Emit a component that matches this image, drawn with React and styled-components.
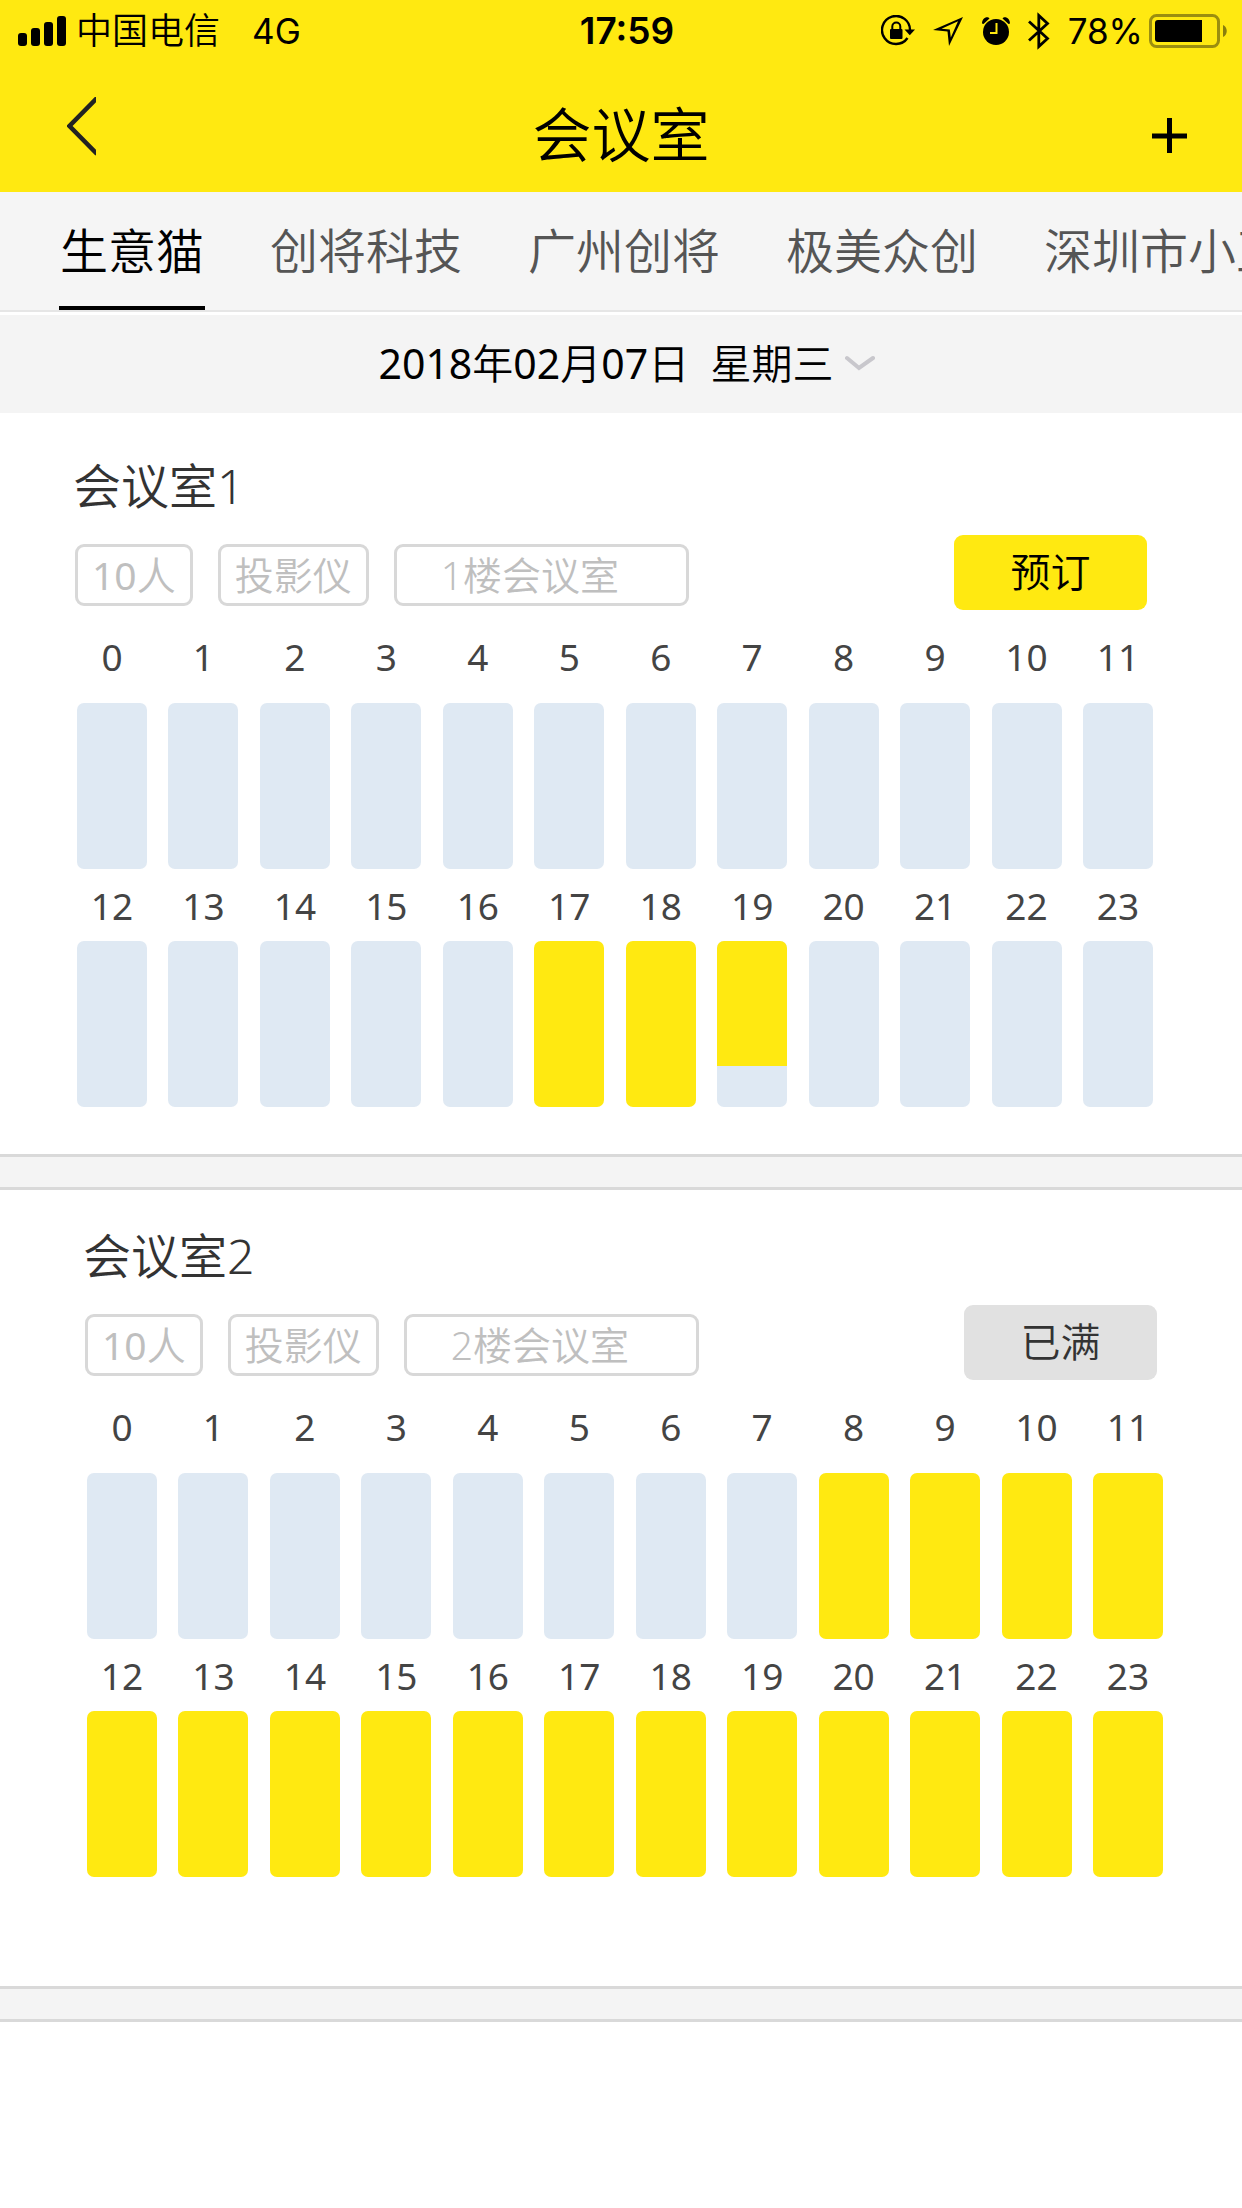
import React from "react";
import styled, { createGlobalStyle, css } from "styled-components";

const YELLOW = "#ffe911";
const FREE = "#dfe9f3";

const GlobalStyle = createGlobalStyle`
  *, *::before, *::after { box-sizing: border-box; }
  html, body { margin: 0; padding: 0; background: #fff; }
  body {
    font-family: "Noto Sans", "Noto Sans CJK SC", sans-serif;
    color: #000;
    overflow-x: hidden;
  }
  button { font: inherit; color: inherit; border: 0; background: none; padding: 0; cursor: pointer; }
  h1, h2, ul, ol { margin: 0; padding: 0; font-weight: 350; list-style: none; }
`;

const Header = styled.header`
  background: ${YELLOW};
`;

const StatusBar = styled.div`
  display: grid;
  grid-template-columns: 1fr auto 1fr;
  align-items: center;
  height: 62px;
  padding: 0 14px 0 18px;
  font-family: Inter, "Noto Sans CJK SC", sans-serif;
  font-size: 35px;
  line-height: 62px;
`;

const StatusLeft = styled.div`
  display: flex;
  align-items: center;
  white-space: nowrap;
`;

const Carrier = styled.span`
  margin: 0 32px 0 8px;
  font-size: 36px;
  font-weight: 350;
`;

const Clock = styled.time`
  padding-left: 8px;
  font-size: 37px;
  font-weight: 600;
`;

const StatusRight = styled.div`
  display: flex;
  align-items: center;
  justify-content: flex-end;
  gap: 18px;
`;

const Power = styled.div`
  display: flex;
  align-items: center;
  gap: 6px;
`;

const NavBar = styled.div`
  display: grid;
  grid-template-columns: 1fr auto 1fr;
  align-items: center;
  height: 130px;
  padding: 0 54px;
`;

const NavButton = styled.button`
  display: flex;
  justify-self: ${(p) => p.$side};
  padding: ${(p) => (p.$side === "end" ? "18px 0 0" : "0 13px")};
`;

const NavTitle = styled.h1`
  padding-top: 14px;
  font-size: 59px;
  line-height: 80px;
`;

const Tabs = styled.nav`
  display: flex;
  gap: 64px;
  height: 120px;
  padding-left: 59px;
  overflow: hidden;
  background: #f5f5f5;
  border-bottom: 2px solid #e6e6e6;
`;

const Tab = styled.button`
  flex: none;
  height: 118px;
  padding: 0 1px;
  font-size: 48px;
  font-weight: 350;
  line-height: 110px;
  color: #555;
  border-top: 4px solid transparent;
  border-bottom: 4px solid transparent;
  ${(p) =>
    p.$active &&
    css`
      color: #000;
      border-bottom-color: #000;
    `}
`;

const DateButton = styled.button`
  display: flex;
  align-items: center;
  justify-content: center;
  gap: 12px;
  width: 100%;
  height: 98px;
  margin-top: 3px;
  padding: 0 0 2px 12px;
  background: #f4f4f4;
  font-size: 41px;
  font-weight: 350;
  line-height: 60px;
  white-space: pre;
`;

const Digits = styled.span`
  font-weight: 400;
`;

const Room = styled.section`
  padding: ${(p) => p.$padding};
`;

const RoomTitle = styled.h2`
  margin-left: -2px;
  font-size: 48px;
  line-height: 60px;
  color: #333;
`;

const RoomInfo = styled.div`
  display: flex;
  align-items: center;
  justify-content: space-between;
  height: 76px;
  margin-top: 18px;
  padding-right: 6px;
`;

const TagList = styled.ul`
  display: flex;
  gap: 25px;
  margin-top: 6px;
`;

const Tag = styled.li`
  height: 62px;
  width: ${(p) => (p.$wide ? "295px" : "auto")};
  padding: 0 ${(p) => (p.$wide ? 44 : 14)}px;
  border: 3px solid #d8d8d8;
  border-radius: 9px;
  font-size: 39px;
  font-weight: 350;
  line-height: 56px;
  color: #bfbfbf;
  white-space: nowrap;
`;

const BookButton = styled.button`
  width: 193px;
  height: 75px;
  border-radius: 9px;
  font-size: 40px;
  font-weight: 350;
  line-height: 74px;
  background: ${(p) => (p.disabled ? "#e1e1e1" : YELLOW)};
  color: ${(p) => (p.disabled ? "#333" : "#000")};
`;

const HourRow = styled.ol`
  display: flex;
  justify-content: space-between;
  padding: ${(p) => p.$top}px 0 0 2px;
`;

const Hour = styled.li`
  display: flex;
  flex-direction: column;
  gap: ${(p) => p.$gap}px;
  width: 70px;
  text-align: center;
  font-size: 37px;
  font-weight: 400;
  line-height: 40px;
  color: #444;
`;

const Slot = styled.div`
  height: 166px;
  border-radius: 7px;
  overflow: hidden;
  background: ${FREE};
`;

const Booked = styled.div`
  background: ${YELLOW};
`;

const Divider = styled.div`
  height: 36px;
  background: #f4f4f4;
  border: solid #d9d9d9;
  border-width: 3px 0;
`;

const SignalIcon = () => (
  <svg width="50" height="32" viewBox="0 0 50 32" aria-hidden="true">
    <rect x="0" y="18" width="9" height="13" rx="3" />
    <rect x="13" y="13" width="9" height="18" rx="3" />
    <rect x="26" y="7" width="9" height="24" rx="3" />
    <rect x="39" y="1" width="9" height="30" rx="3" />
  </svg>
);

const LockIcon = () => (
  <svg width="34" height="32" viewBox="0 0 34 32" fill="none" stroke="#000" aria-hidden="true">
    <path d="M26.500 23A14 14 0 1 1 29 15.500" strokeWidth="2.4" />
    <path d="M23.500 14.500h10.500l-5.200 5.800z" fill="#000" stroke="none" />
    <rect x="9" y="14" width="12.500" height="10" rx="1" fill="#000" stroke="none" />
    <path d="M11.300 15v-3.500a4 4 0 0 1 8 0V15" strokeWidth="2" />
  </svg>
);

const LocationIcon = () => (
  <svg width="31" height="30" viewBox="0 0 31 30" fillRule="evenodd" aria-hidden="true">
    <path d="M30 1 16 30 14.500 15.500 0 14zM25 5.200 8.500 12.800l8.300.6 1 8.200z" />
  </svg>
);

const AlarmIcon = () => (
  <svg width="28" height="28" viewBox="0 0 28 28" aria-hidden="true">
    <circle cx="14" cy="15" r="13" />
    <path d="M0 6.500C0 2.500 3-.5 6.500.4L7.500 1.500 1.500 7zM28 6.500C28 2.500 25-.5 21.500.4L20.500 1.500 26.500 7z" />
    <path d="M14.500 6v10H8" fill="none" stroke={YELLOW} strokeWidth="2" />
  </svg>
);

const BluetoothIcon = () => (
  <svg width="22" height="38" viewBox="0 0 22 38" fill="none" stroke="#000" strokeWidth="2.800" aria-hidden="true">
    <path d="M1 9.500 19.500 26.500 10.800 34.500V3.500L19.500 11.500 1 28.500" />
  </svg>
);

const BatteryIcon = () => (
  <svg width="79" height="34" viewBox="0 0 79 34" aria-hidden="true">
    <rect x="1.500" y="1.500" width="68" height="31" rx="6" fill="none" stroke="#9b8e0f" strokeWidth="3" />
    <path d="M6 9a3 3 0 0 1 3-3h44v22H9a3 3 0 0 1-3-3z" />
    <path d="M74 11c5 2 5 10 0 12z" fill="#8a7f0d" />
  </svg>
);

const BackIcon = () => (
  <svg width="29" height="60" viewBox="0 0 29 60" fill="none" stroke="#222" strokeWidth="4.500" aria-hidden="true">
    <path d="M30 1 2.500 29 30 57" />
  </svg>
);

const PlusIcon = () => (
  <svg width="37" height="36" viewBox="0 0 37 36" fill="none" stroke="#000" strokeWidth="5" aria-hidden="true">
    <path d="M1 18h35M18.500 0v35" />
  </svg>
);

const ChevronIcon = () => (
  <svg width="30" height="16" viewBox="0 0 30 16" fill="none" stroke="#c8c7cc" strokeWidth="4" strokeLinecap="round" aria-hidden="true">
    <path d="M2 3 14 13 28 3" />
  </svg>
);

const TABS = ["生意猫", "创将科技", "广州创将", "极美众创", "深圳市小正科技"];

const ROOMS = [
  {
    name: "会议室1",
    seats: 10,
    equipment: "投影仪",
    place: "1楼会议室",
    full: false,
    booked: { 17: 1, 18: 1, 19: 0.75 },
    padding: "43px 89px 47px 75px",
  },
  {
    name: "会议室2",
    seats: 10,
    equipment: "投影仪",
    place: "2楼会议室",
    full: true,
    booked: Object.fromEntries(Array.from({ length: 16 }, (_, i) => [i + 8, 1])),
    padding: "36px 79px 109px 85px",
  },
];

const Hours = ({ from, top, gap, booked }) => (
  <HourRow $top={top} start={from}>
    {Array.from({ length: 12 }, (_, i) => from + i).map((hour) => (
      <Hour key={hour} $gap={gap}>
        {hour}
        <Slot>{booked[hour] && <Booked style={{ height: `${booked[hour] * 100}%` }} />}</Slot>
      </Hour>
    ))}
  </HourRow>
);

export default function App() {
  const [active, setActive] = React.useState(0);
  return (
    <>
      <GlobalStyle />
      <Header>
        <StatusBar>
          <StatusLeft>
            <SignalIcon />
            <Carrier>中国电信</Carrier>
            <span>4G</span>
          </StatusLeft>
          <Clock>17:59</Clock>
          <StatusRight>
            <LockIcon />
            <LocationIcon />
            <AlarmIcon />
            <BluetoothIcon />
            <Power>
              <span>78%</span>
              <BatteryIcon />
            </Power>
          </StatusRight>
        </StatusBar>
        <NavBar>
          <NavButton $side="start" aria-label="返回">
            <BackIcon />
          </NavButton>
          <NavTitle>会议室</NavTitle>
          <NavButton $side="end" aria-label="添加">
            <PlusIcon />
          </NavButton>
        </NavBar>
      </Header>
      <Tabs>
        {TABS.map((name, i) => (
          <Tab key={name} $active={i === active} onClick={() => setActive(i)}>
            {name}
          </Tab>
        ))}
      </Tabs>
      <DateButton>
        <span>
          <Digits>2018</Digits>年<Digits>02</Digits>月<Digits>07</Digits>
          {"日  星期三"}
        </span>
        <ChevronIcon />
      </DateButton>
      <main>
        {ROOMS.map((room) => (
          <React.Fragment key={room.name}>
            <Room $padding={room.padding}>
              <RoomTitle>{room.name}</RoomTitle>
              <RoomInfo>
                <TagList>
                  <Tag>
                    <Digits>{room.seats}</Digits>人
                  </Tag>
                  <Tag>{room.equipment}</Tag>
                  <Tag $wide>{room.place}</Tag>
                </TagList>
                <BookButton disabled={room.full}>{room.full ? "已满" : "预订"}</BookButton>
              </RoomInfo>
              <Hours from={0} top={27} gap={26} booked={room.booked} />
              <Hours from={12} top={17} gap={15} booked={room.booked} />
            </Room>
            <Divider />
          </React.Fragment>
        ))}
      </main>
    </>
  );
}
